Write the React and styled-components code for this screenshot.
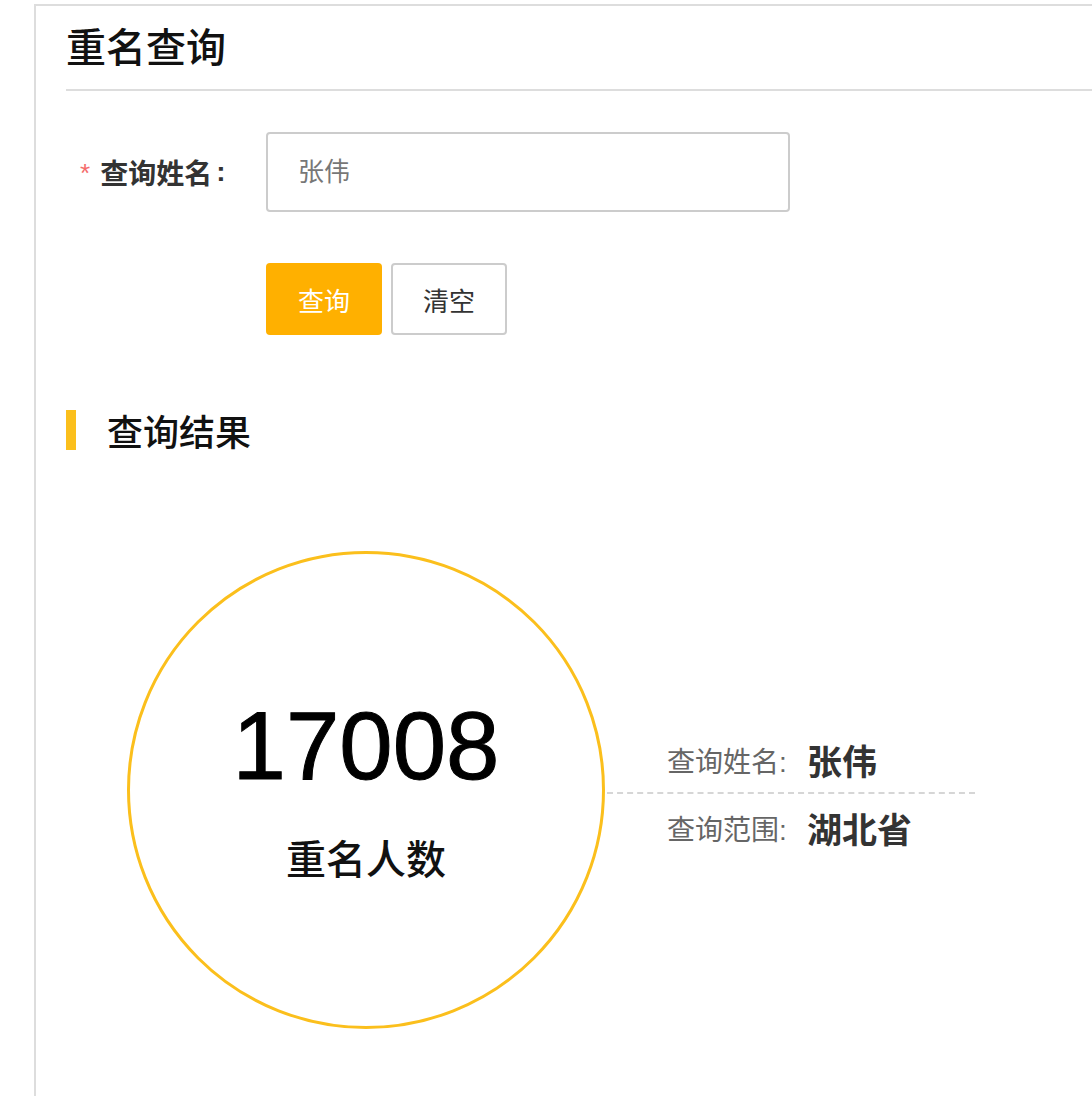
import React from "react";
import styled, { createGlobalStyle } from "styled-components";

const GlobalStyle = createGlobalStyle`
  html, body {
    margin: 0;
    padding: 0;
    background: #fff;
  }
  body {
    font-family: "Liberation Sans", "Noto Sans CJK SC", sans-serif;
    color: #333;
  }
`;

const Panel = styled.div`
  margin: 4px 0 0 34px;
  border-left: 2px solid #ddd;
  border-top: 2px solid #ddd;
  padding-left: 30px;
  min-height: 1092px;
  box-sizing: border-box;
`;

const Header = styled.div`
  height: 83px;
  border-bottom: 2px solid #ddd;
  display: flex;
  align-items: center;
`;

const Title = styled.h1`
  margin: 0;
  font-size: 40px;
  font-weight: 500;
  color: #111;
  line-height: 1;
  margin-top: 0;
`;

const FormRow = styled.div`
  display: flex;
  align-items: center;
  margin-top: ${({ top }) => top}px;
`;

const Label = styled.label`
  width: 200px;
  display: flex;
  align-items: center;
  font-size: 28px;
  font-weight: 700;
  color: #333;
  padding-left: 14px;
  box-sizing: border-box;
`;

const Star = styled.span`
  color: #f56c6c;
  font-size: 26px;
  margin-right: 10px;
  font-weight: 400;
  position: relative;
  top: 1px;
`;

const Colon = styled.span`
  margin-left: 4px;
`;

const Input = styled.input`
  width: 524px;
  height: 80px;
  box-sizing: border-box;
  border: 2px solid #ccc;
  border-radius: 4px;
  padding: 0 30px;
  font-size: 26px;
  font-family: inherit;
  color: #333;
  outline: none;
  &::placeholder {
    color: #777;
  }
`;

const Buttons = styled.div`
  display: flex;
  gap: 9px;
  margin: 51px 0 0 200px;
`;

const Button = styled.button`
  width: 116px;
  height: 72px;
  box-sizing: border-box;
  border-radius: 4px;
  font-size: 26px;
  font-family: inherit;
  cursor: pointer;
  border: ${({ primary }) => (primary ? "none" : "2px solid #ccc")};
  background: ${({ primary }) => (primary ? "#ffb000" : "#fff")};
  color: ${({ primary }) => (primary ? "#fff" : "#333")};
`;

const SectionTitle = styled.div`
  display: flex;
  align-items: center;
  margin-top: 75px;
  height: 40px;
  &::before {
    content: "";
    width: 10px;
    height: 40px;
    background: #fbbf1c;
    margin-right: 31px;
  }
  span {
    font-size: 36px;
    font-weight: 500;
    color: #111;
  }
`;

const Result = styled.div`
  display: flex;
  align-items: center;
  margin: 101px 0 0 61px;
`;

const Circle = styled.div`
  width: 478px;
  height: 478px;
  box-sizing: border-box;
  border: 3px solid #fbbf1c;
  border-radius: 50%;
  display: flex;
  flex-direction: column;
  align-items: center;
  justify-content: center;
  flex-shrink: 0;
`;

const Count = styled.div`
  font-size: 96px;
  color: #000;
  line-height: 1;
  margin-top: 4px;
  -webkit-text-stroke: 1px #000;
`;

const CountLabel = styled.div`
  font-size: 40px;
  font-weight: 500;
  color: #111;
  margin-top: 34px;
`;

const Info = styled.div`
  width: 368px;
  margin-left: 2px;
  margin-top: 8px;
`;

const InfoRow = styled.div`
  height: 67px;
  display: flex;
  align-items: center;
  padding-left: 60px;
  box-sizing: border-box;
  border-bottom: ${({ divider }) => (divider ? "2px dashed #d6d6d6" : "none")};
`;

const InfoKey = styled.span`
  font-size: 28px;
  color: #666;
  width: 140px;
`;

const InfoValue = styled.span`
  font-size: 35px;
  font-weight: 700;
  color: #333;
`;

export default function App() {
  return (
    <>
      <GlobalStyle />
      <Panel>
        <Header>
          <Title>重名查询</Title>
        </Header>
        <FormRow top={41}>
          <Label>
            <Star>*</Star>查询姓名<Colon>:</Colon>
          </Label>
          <Input placeholder="张伟" />
        </FormRow>
        <Buttons>
          <Button primary>查询</Button>
          <Button>清空</Button>
        </Buttons>
        <SectionTitle>
          <span>查询结果</span>
        </SectionTitle>
        <Result>
          <Circle>
            <Count>17008</Count>
            <CountLabel>重名人数</CountLabel>
          </Circle>
          <Info>
            <InfoRow divider>
              <InfoKey>查询姓名:</InfoKey>
              <InfoValue>张伟</InfoValue>
            </InfoRow>
            <InfoRow>
              <InfoKey>查询范围:</InfoKey>
              <InfoValue>湖北省</InfoValue>
            </InfoRow>
          </Info>
        </Result>
      </Panel>
    </>
  );
}
